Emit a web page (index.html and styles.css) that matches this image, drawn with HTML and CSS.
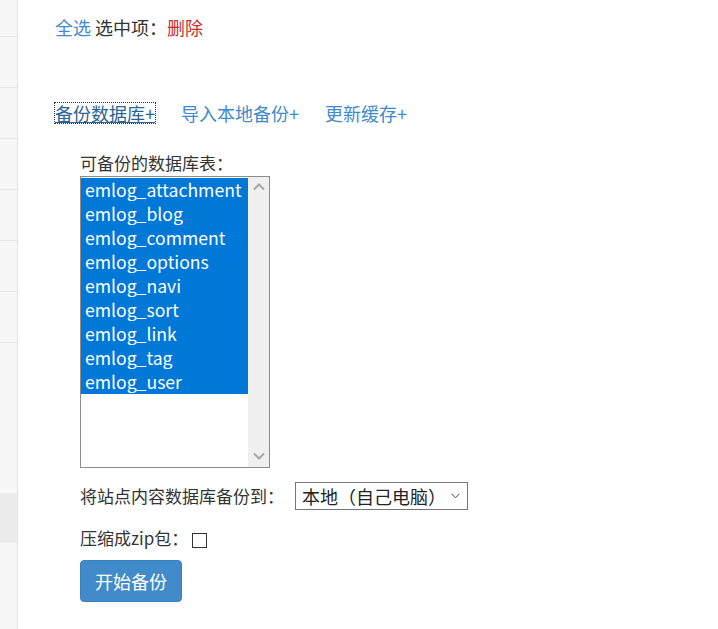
FILE: index.html
```html
<!DOCTYPE html>
<html lang="zh-CN">
<head>
<meta charset="utf-8">
<title>数据备份</title>
<link rel="stylesheet" href="styles.css">
</head>
<body>
<div class="page">
  <aside class="sidebar">
    <div class="nav-item first"></div>
    <div class="nav-item"></div>
    <div class="nav-item"></div>
    <div class="nav-item"></div>
    <div class="nav-item"></div>
    <div class="nav-item"></div>
    <div class="nav-item"></div>
    <div class="nav-group"></div>
    <div class="nav-item active"></div>
    <div class="nav-rest"></div>
  </aside>
  <main class="main">
    <div class="bulk">
      <a class="link" href="#">全选</a> 选中项：<a class="link danger" href="#">删除</a>
    </div>
    <nav class="tabs">
      <a class="tab current" href="#">备份数据库+</a>
      <a class="tab" href="#">导入本地备份+</a>
      <a class="tab" href="#">更新缓存+</a>
    </nav>
    <form class="backup">
      <div class="label">可备份的数据库表：</div>
      <div class="listbox">
        <ul class="options">
          <li class="opt">emlog_attachment</li>
          <li class="opt">emlog_blog</li>
          <li class="opt">emlog_comment</li>
          <li class="opt">emlog_options</li>
          <li class="opt">emlog_navi</li>
          <li class="opt">emlog_sort</li>
          <li class="opt">emlog_link</li>
          <li class="opt">emlog_tag</li>
          <li class="opt">emlog_user</li>
        </ul>
        <div class="scrollbar">
          <svg class="arrow" width="12" height="8" viewBox="0 0 12 8"><path d="M1 6.5 L6 1.5 L11 6.5" fill="none" stroke="#a6a6a6" stroke-width="2"/></svg>
          <svg class="arrow" width="12" height="8" viewBox="0 0 12 8"><path d="M1 1.5 L6 6.5 L11 1.5" fill="none" stroke="#a6a6a6" stroke-width="2"/></svg>
        </div>
      </div>
      <div class="row">
        <span>将站点内容数据库备份到：</span>
        <div class="dropdown">
          <span>本地（自己电脑）</span>
          <svg class="chev" width="9" height="6" viewBox="0 0 9 6"><path d="M0.5 0.8 L4.5 4.8 L8.5 0.8" fill="none" stroke="#444" stroke-width="1"/></svg>
        </div>
      </div>
      <div class="row zip">
        <span>压缩成zip包：</span>
        <span class="checkbox"></span>
      </div>
      <button class="btn" type="button">开始备份</button>
    </form>
  </main>
</div>
</body>
</html>
```
FILE: styles.css
```css
html, body {
  margin: 0;
  padding: 0;
  background: #fff;
}
body {
  font-family: "Noto Sans CJK SC", "Noto Sans", sans-serif;
  font-size: 17px;
  color: #333;
}
.page {
  display: flex;
  min-height: 629px;
}
.sidebar {
  width: 17px;
  flex: none;
  background: #f7f7f7;
  border-right: 1px solid #e3e3e3;
  display: flex;
  flex-direction: column;
}
.nav-item {
  height: 50px;
  border-bottom: 1px solid #e6e6e6;
}
.nav-item.first {
  height: 36px;
}
.nav-group {
  height: 150px;
}
.nav-item.active {
  background: #ececec;
  border-bottom: none;
  height: 50px;
}
.nav-rest {
  flex: 1;
}
.main {
  flex: 1;
  padding: 15px 0 0 37px;
}
.bulk {
  font-size: 18px;
  line-height: 24px;
}
.link {
  color: #428bca;
  text-decoration: none;
}
.link.danger {
  color: #c9302c;
}
.tabs {
  margin-top: 64px;
  display: flex;
  gap: 26px;
  font-size: 18px;
  line-height: 20px;
}
.tab {
  color: #428bca;
  text-decoration: none;
}
.tab.current {
  color: #2a6496;
  text-decoration: underline;
  outline: 1px dotted #333;
}
.backup {
  margin: 28px 0 0 25px;
}
.label {
  font-size: 17px;
  line-height: 24px;
}
.listbox {
  width: 188px;
  height: 290px;
  border: 1px solid #8c8c8c;
  display: flex;
  margin-top: 1px;
}
.options {
  list-style: none;
  margin: 0;
  padding: 1px 0 0;
  width: 167px;
  font-size: 17.6px;
}
.opt {
  height: 24px;
  line-height: 24px;
  padding-left: 4px;
  background: #0078d7;
  color: #fff;
  white-space: nowrap;
}
.scrollbar {
  width: 21px;
  background: #f0f0f0;
  display: flex;
  flex-direction: column;
  justify-content: space-between;
  align-items: center;
  padding: 6px 0 7px;
  box-sizing: border-box;
}
.row {
  display: flex;
  align-items: center;
  font-size: 17px;
  line-height: 24px;
  margin-top: 14px;
}
.dropdown {
  margin-left: 11px;
  box-sizing: border-box;
  width: 173px;
  height: 28px;
  border: 1px solid #767676;
  display: flex;
  align-items: center;
  justify-content: space-between;
  padding: 0 7px 0 6px;
  font-size: 18px;
  color: #222;
}
.chev {
  flex: none;
}
.row.zip {
  margin-top: 16px;
}
.checkbox {
  width: 13px;
  height: 13px;
  border: 1px solid #333;
  background: #fff;
  margin-left: 4px;
  margin-top: 5px;
}
.btn {
  display: block;
  margin-top: 10px;
  width: 102px;
  height: 42px;
  background: #428bca;
  border: 1px solid #3b82c0;
  border-radius: 4px;
  color: #fff;
  font-family: inherit;
  font-size: 18px;
  padding: 0;
}
```
